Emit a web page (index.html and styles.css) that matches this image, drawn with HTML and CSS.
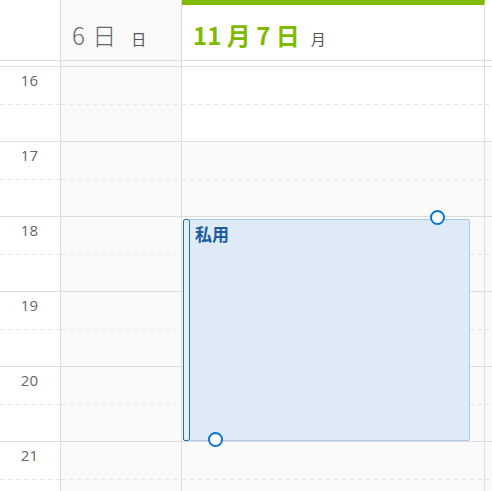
FILE: index.html
```html
<!DOCTYPE html>
<html lang="ja">
<head>
<meta charset="utf-8">
<link rel="stylesheet" href="styles.css">
</head>
<body>
<div class="cal">
  <div class="head">
    <div class="hcell time"></div>
    <div class="hcell day off"><span class="big">6 日</span><span class="dow wide">日</span></div>
    <div class="hcell day today"><span class="big">11 月 7 日</span><span class="dow">月</span></div>
    <div class="hcell day"></div>
  </div>
  <div class="allday">
    <div class="acell"></div>
    <div class="acell off"></div>
    <div class="acell"></div>
    <div class="acell"></div>
  </div>
  <div class="body">
    <div class="col time">
      <div class="hour"><span class="lbl">16</span></div>
      <div class="hour"><span class="lbl">17</span></div>
      <div class="hour"><span class="lbl">18</span></div>
      <div class="hour"><span class="lbl">19</span></div>
      <div class="hour"><span class="lbl">20</span></div>
      <div class="hour"><span class="lbl">21</span></div>
    </div>
    <div class="col off">
      <div class="hour"></div><div class="hour"></div><div class="hour"></div>
      <div class="hour"></div><div class="hour"></div><div class="hour"></div>
    </div>
    <div class="col work">
      <div class="hour"></div><div class="hour"></div><div class="hour"></div>
      <div class="hour"></div><div class="hour"></div><div class="hour"></div>
      <div class="event">
        <div class="ebar"></div>
        <div class="emain"><span class="etitle">私用</span></div>
        <span class="handle h-top"></span>
        <span class="handle h-bot"></span>
      </div>
    </div>
    <div class="col work">
      <div class="hour"></div><div class="hour"></div><div class="hour"></div>
      <div class="hour"></div><div class="hour"></div><div class="hour"></div>
    </div>
  </div>
</div>
</body>
</html>
```

FILE: styles.css
```css
html, body {
  margin: 0;
  padding: 0;
  background: #fff;
  overflow: hidden;
}
body {
  font-family: "Open Sans", "Noto Sans CJK JP", sans-serif;
  width: 492px;
  height: 491px;
}
.cal {
  width: 492px;
  height: 491px;
  overflow: hidden;
}
.head, .allday, .body {
  display: grid;
  grid-template-columns: 61px 121px 303px 1fr;
}
.hcell {
  height: 61px;
  box-sizing: border-box;
  border-right: 1px solid #dddddd;
  border-bottom: 1px solid #dddddd;
  display: flex;
  align-items: baseline;
  padding: 20px 0 0 11px;
  white-space: nowrap;
  overflow: hidden;
}
.hcell.time { padding: 0; }
.hcell:last-child, .acell:last-child, .col:last-child { border-right: none; }
.hcell.off { background: #f9f9f9; }
.hcell.today {
  border-top: 5px solid #7fba00;
  padding-top: 15px;
}
.big {
  font-family: "Noto Sans CJK JP", sans-serif;
  font-size: 24px;
  font-weight: 300;
  line-height: 30px;
  color: #666;
  word-spacing: 2px;
}
.today .big {
  color: #7fba00;
  font-weight: 700;
  word-spacing: 0;
}
.dow {
  font-family: "Noto Sans CJK JP", sans-serif;
  font-size: 15px;
  color: #555;
  margin-left: 11px;
}
.dow.wide { margin-left: 15px; }
.acell {
  height: 6px;
  box-sizing: border-box;
  border-right: 1px solid #dddddd;
  border-bottom: 1px solid #dddddd;
}
.acell.off { background: #f9f9f9; }
.col {
  box-sizing: border-box;
  border-right: 1px solid #dddddd;
  position: relative;
}
.hour {
  height: 75px;
  box-sizing: border-box;
  border-bottom: 1px solid #dddddd;
  background-image: linear-gradient(to right, #e4e4e4 50%, transparent 50%);
  background-size: 8px 1px;
  background-repeat: repeat-x;
  background-position: 0 37px;
}
.col.off .hour { background-color: #fafafa; }
.col.work .hour + .hour { background-color: #fafafa; }
.time .hour {
  text-align: right;
  padding: 2px 22px 0 0;
}
.lbl {
  font-size: 15px;
  line-height: 20px;
  color: #666;
}
.event {
  position: absolute;
  left: 1px;
  top: 152px;
  width: 287px;
  height: 222px;
  display: flex;
}
.ebar {
  width: 7px;
  box-sizing: border-box;
  border: 1px solid #1b6ec2;
  border-radius: 2px;
  background: #e6f0f9;
}
.emain {
  flex: 1;
  box-sizing: border-box;
  background: #deebf7;
  border: 1px solid #a9cbea;
  border-left: none;
  border-radius: 0 2px 2px 0;
  padding: 4px 0 0 5px;
}
.etitle {
  font-family: "Noto Sans CJK JP", sans-serif;
  font-size: 17px;
  font-weight: 700;
  line-height: 20px;
  color: #1a5c9f;
}
.handle {
  position: absolute;
  width: 15px;
  height: 15px;
  box-sizing: border-box;
  border: 2px solid #0a74d1;
  border-radius: 50%;
  background: #fff;
}
.h-top { left: 247px; top: -9px; }
.h-bot { left: 25px; top: 213px; }
```
